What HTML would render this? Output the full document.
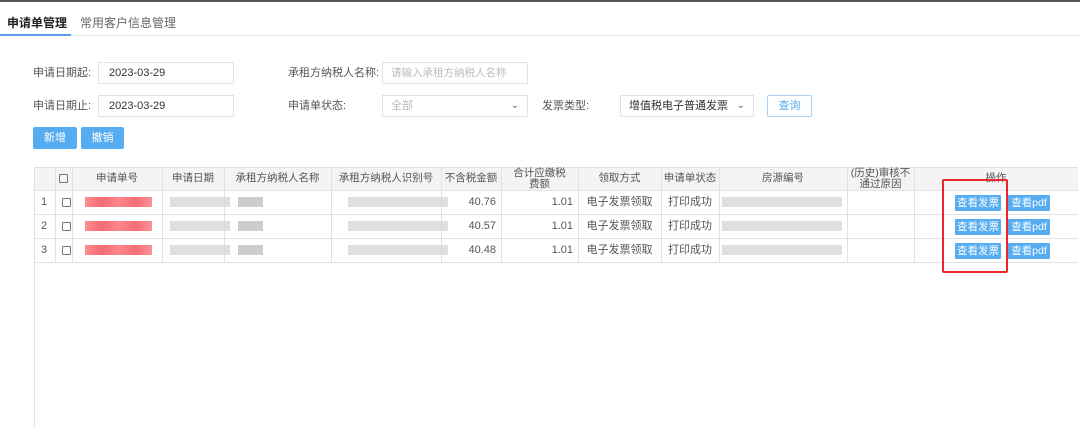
<!DOCTYPE html>
<html><head><meta charset="utf-8"><style>
*{margin:0;padding:0;box-sizing:border-box}
body{width:1080px;height:427px;background:#fff;position:relative;overflow:hidden;font-family:"Liberation Sans","Noto Sans CJK SC",sans-serif;font-size:11px;color:#333}
.a{position:absolute}
.lbl{position:absolute;font-size:11px;color:#555;height:22px;line-height:22px}
.inp{position:absolute;border:1px solid #e3e3e3;height:22px;line-height:20px;padding-left:10px;font-size:11px;color:#333;background:#fff;white-space:nowrap}
.btn{position:absolute;background:#55acf0;color:#fff;text-align:center;font-size:11px;border-radius:2px}
.v{position:absolute;top:167px;width:1px;height:95px;background:#e2e2e2}
.h{position:absolute;left:34px;width:1044px;height:1px;background:#e2e2e2}
.th{position:absolute;top:167px;height:23px;line-height:23px;text-align:center;font-size:10.5px;color:#555;white-space:nowrap}
.c{position:absolute;height:24px;line-height:24px;font-size:11px;color:#555;white-space:nowrap}
.cb{position:absolute;width:9px;height:9px;border:1px solid #777;border-radius:1px}
.red{position:absolute;height:10px;background:linear-gradient(90deg,#fb8d93,#fa6b73,#fb868c,#fa6e76,#fb9197)}
.g{position:absolute;height:10px;background:#dcdcdc;opacity:.9}
.sb{position:absolute;height:16px;line-height:16px;background:#55acf0;color:#fff;font-size:10.5px;text-align:center;border-radius:1px;white-space:nowrap}
</style></head><body>
<div class="a" style="left:0;top:0;width:1080px;height:2px;background:#555"></div>
<div class="a" style="left:7px;top:14px;font-size:12px;color:#222;font-weight:bold">申请单管理</div>
<div class="a" style="left:80px;top:14px;font-size:12px;color:#666">常用客户信息管理</div>
<div class="a" style="left:0;top:35px;width:1080px;height:1px;background:#e6e6e6"></div>
<div class="a" style="left:0;top:34px;width:71px;height:2px;background:#5b9be6"></div>

<div class="lbl" style="left:33px;top:62px">申请日期起:</div>
<div class="inp" style="left:98px;top:62px;width:136px">2023-03-29</div>
<div class="lbl" style="left:33px;top:95px">申请日期止:</div>
<div class="inp" style="left:98px;top:95px;width:136px">2023-03-29</div>
<div class="lbl" style="left:288px;top:62px">承租方纳税人名称:</div>
<div class="inp" style="left:382px;top:62px;width:146px;color:#bbb;padding-left:8px;font-size:10.5px">请输入承租方纳税人名称</div>
<div class="lbl" style="left:288px;top:95px">申请单状态:</div>
<div class="inp" style="left:382px;top:95px;width:146px;color:#bbb;padding-left:8px">全部<span style="position:absolute;right:8px;color:#666;font-size:10px">&#8964;</span></div>
<div class="lbl" style="left:542px;top:95px">发票类型:</div>
<div class="inp" style="left:620px;top:95px;width:134px;padding-left:8px">增值税电子普通发票<span style="position:absolute;right:8px;color:#666;font-size:10px">&#8964;</span></div>
<div class="a" style="left:767px;top:95px;width:45px;height:22px;border:1px solid #a8d0f5;color:#55acf0;text-align:center;line-height:20px;border-radius:2px">查询</div>
<div class="btn" style="left:33px;top:127px;width:44px;height:22px;line-height:22px">新增</div>
<div class="btn" style="left:81px;top:127px;width:43px;height:22px;line-height:22px">撤销</div>

<div class="a" style="left:34px;top:167px;width:1044px;height:23px;background:#f4f4f4"></div>
<div class="h" style="top:167px"></div>
<div class="h" style="top:190px"></div>
<div class="h" style="top:214px"></div>
<div class="h" style="top:238px"></div>
<div class="h" style="top:262px"></div>
<div class="a" style="left:34px;top:167px;width:1px;height:260px;background:#e2e2e2"></div>
<div class="v" style="left:55px"></div><div class="v" style="left:72px"></div><div class="v" style="left:162px"></div><div class="v" style="left:224px"></div><div class="v" style="left:331px"></div><div class="v" style="left:441px"></div><div class="v" style="left:501px"></div><div class="v" style="left:578px"></div><div class="v" style="left:661px"></div><div class="v" style="left:719px"></div><div class="v" style="left:847px"></div><div class="v" style="left:914px"></div>

<div class="cb" style="left:59px;top:174px"></div>
<div class="th" style="left:72px;width:90px">申请单号</div>
<div class="th" style="left:162px;width:62px">申请日期</div>
<div class="th" style="left:224px;width:107px">承租方纳税人名称</div>
<div class="th" style="left:331px;width:110px">承租方纳税人识别号</div>
<div class="th" style="left:441px;width:60px">不含税金额</div>
<div class="th" style="left:501px;width:77px;line-height:11px;padding-top:1px">合计应缴税<br>费额</div>
<div class="th" style="left:578px;width:83px">领取方式</div>
<div class="th" style="left:661px;width:58px">申请单状态</div>
<div class="th" style="left:719px;width:128px">房源编号</div>
<div class="th" style="left:847px;width:67px;line-height:11px;padding-top:1px">(历史)审核不<br>通过原因</div>
<div class="th" style="left:914px;width:164px">操作</div>

<div class="c" style="left:41px;top:190px">1</div><div class="c" style="left:41px;top:214px">2</div><div class="c" style="left:41px;top:238px">3</div>
<div class="cb" style="left:62px;top:198px"></div><div class="cb" style="left:62px;top:222px"></div><div class="cb" style="left:62px;top:246px"></div>
<div class="red" style="left:85px;top:197px;width:67px"></div><div class="red" style="left:85px;top:221px;width:67px"></div><div class="red" style="left:85px;top:245px;width:67px"></div>
<div class="g" style="left:170px;top:197px;width:60px"></div><div class="g" style="left:170px;top:221px;width:60px"></div><div class="g" style="left:170px;top:245px;width:60px"></div>
<div class="g" style="left:238px;top:197px;width:25px;background:#c8c8c8"></div><div class="g" style="left:238px;top:221px;width:25px;background:#c8c8c8"></div><div class="g" style="left:238px;top:245px;width:25px;background:#c8c8c8"></div>
<div class="g" style="left:348px;top:197px;width:100px"></div><div class="g" style="left:348px;top:221px;width:100px"></div><div class="g" style="left:348px;top:245px;width:100px"></div>
<div class="c" style="left:441px;top:190px;width:55px;text-align:right">40.76</div><div class="c" style="left:441px;top:214px;width:55px;text-align:right">40.57</div><div class="c" style="left:441px;top:238px;width:55px;text-align:right">40.48</div>
<div class="c" style="left:501px;top:190px;width:72px;text-align:right">1.01</div><div class="c" style="left:501px;top:214px;width:72px;text-align:right">1.01</div><div class="c" style="left:501px;top:238px;width:72px;text-align:right">1.01</div>
<div class="c" style="left:578px;top:190px;width:83px;text-align:center">电子发票领取</div><div class="c" style="left:578px;top:214px;width:83px;text-align:center">电子发票领取</div><div class="c" style="left:578px;top:238px;width:83px;text-align:center">电子发票领取</div>
<div class="c" style="left:661px;top:190px;width:58px;text-align:center">打印成功</div><div class="c" style="left:661px;top:214px;width:58px;text-align:center">打印成功</div><div class="c" style="left:661px;top:238px;width:58px;text-align:center">打印成功</div>
<div class="g" style="left:722px;top:197px;width:120px"></div><div class="g" style="left:722px;top:221px;width:120px"></div><div class="g" style="left:722px;top:245px;width:120px"></div>
<div class="sb" style="left:955px;top:195px;width:46px">查看发票</div><div class="sb" style="left:1008px;top:195px;width:42px">查看pdf</div>
<div class="sb" style="left:955px;top:219px;width:46px">查看发票</div><div class="sb" style="left:1008px;top:219px;width:42px">查看pdf</div>
<div class="sb" style="left:955px;top:243px;width:46px">查看发票</div><div class="sb" style="left:1008px;top:243px;width:42px">查看pdf</div>
<div class="a" style="left:942px;top:179px;width:66px;height:94px;border:2px solid #e8262c;border-radius:2px"></div>
</body></html>
